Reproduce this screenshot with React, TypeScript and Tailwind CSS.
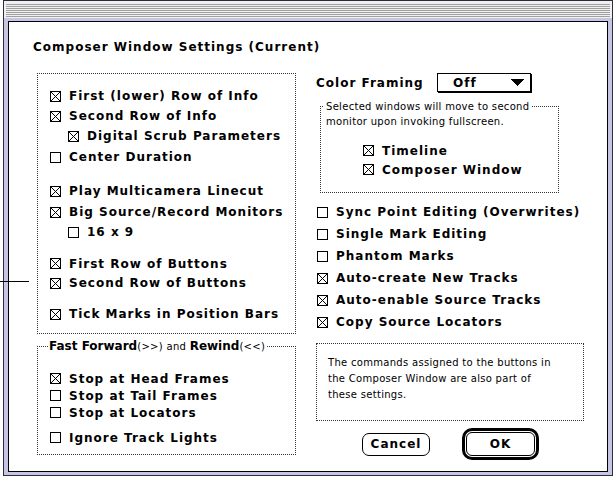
import React from "react";

function Box({ checked }: { checked: boolean }) {
  return (
    <svg width="11" height="11" viewBox="0 0 11 11" className="shrink-0" shapeRendering="crispEdges">
      <rect x="0.5" y="0.5" width="10" height="10" fill="white" stroke="black" />
      {checked && <path d="M1 1L10 10M10 1L1 10" stroke="black" strokeWidth="1" />}
    </svg>
  );
}

function Row({ label, checked, cls }: { label: string; checked: boolean; cls: string }) {
  return (
    <div className={"flex items-center gap-[8px] whitespace-nowrap " + cls}>
      <Box checked={checked} />
      <span className="text-[12px] font-bold tracking-[1px] leading-none">{label}</span>
    </div>
  );
}

export default function App() {
  return (
    <div className="relative w-[613px] h-[479px] bg-white overflow-hidden font-['DejaVu_Sans',sans-serif] text-black">
      <div className="ml-[3px] w-[610px] h-[476px] border border-[#2c2c3c] bg-[#c6c6e4] flex flex-col">
        {/* title bar */}
        <div className="h-[20px] flex flex-col bg-[#f0f0f0]">
          <div className="h-[3px]" />
          <div className="h-[14px] mx-[2px] bg-[repeating-linear-gradient(to_bottom,#a0a0a0_0px,#a0a0a0_1px,#f0f0f0_1px,#f0f0f0_2px)]" />
          <div className="h-[3px] bg-[#c6c6e4]" />
        </div>
        {/* content */}
        <div className="ml-[4px] mr-[4px] mb-[3px] flex-1 border border-black bg-white flex flex-col pl-[24px]">
          <div className="mt-[17px] h-[16px] leading-[16px] text-[12px] font-bold tracking-[1px] whitespace-nowrap">
            Composer Window Settings (Current)
          </div>
          <div className="mt-[18px] flex">
            {/* left column */}
            <div className="ml-[4px] w-[259px] flex flex-col">
              <div className="h-[261px] border border-dotted border-[#333] pt-[12px] pl-[12px] flex flex-col">
                <Row cls="h-[20px]" checked label="First (lower) Row of Info" />
                <Row cls="h-[20px]" checked label="Second Row of Info" />
                <Row cls="h-[20px] pl-[18px]" checked label="Digital Scrub Parameters" />
                <Row cls="h-[20px] mt-[1px]" checked={false} label="Center Duration" />
                <Row cls="h-[20px] mt-[14px]" checked label="Play Multicamera Linecut" />
                <Row cls="h-[20px] mt-[1px]" checked label="Big Source/Record Monitors" />
                <Row cls="h-[20px] pl-[18px]" checked={false} label="16 x 9" />
                <Row cls="h-[19px] mt-[12px]" checked label="First Row of Buttons" />
                <Row cls="h-[20px]" checked label="Second Row of Buttons" />
                <Row cls="h-[20px] mt-[11px]" checked label="Tick Marks in Position Bars" />
              </div>
              <fieldset className="mt-[4px] w-[259px] border border-dotted border-[#333] px-0 pb-[8px]">
                <legend className="ml-[10px] px-[1px] leading-[14px] whitespace-nowrap">
                  <span className="text-[12px] font-bold">Fast Forward</span>
                  <span className="text-[10px] tracking-[0.3px]">(&gt;&gt;) and </span>
                  <span className="text-[12px] font-bold">Rewind</span>
                  <span className="text-[10px] tracking-[0.3px]">(&lt;&lt;)</span>
                </legend>
                <div className="pt-[16px] pl-[12px] flex flex-col">
                  <Row cls="h-[17px]" checked label="Stop at Head Frames" />
                  <Row cls="h-[17px]" checked={false} label="Stop at Tail Frames" />
                  <Row cls="h-[17px]" checked={false} label="Stop at Locators" />
                  <Row cls="h-[17px] mt-[8px]" checked={false} label="Ignore Track Lights" />
                </div>
              </fieldset>
            </div>
            {/* right column */}
            <div className="ml-[20px] w-[268px] flex flex-col">
              <div className="h-[19px] flex items-center">
                <span className="w-[121px] text-[12px] font-bold tracking-[1px] whitespace-nowrap">Color Framing</span>
                <div className="w-[94px] h-[19px] border border-black shadow-[1px_1px_0_0_#000] flex items-center pl-[15px]">
                  <span className="text-[12px] font-bold tracking-[1px]">Off</span>
                  <svg width="14" height="7" viewBox="0 0 14 7" className="ml-auto mr-[6px]" shapeRendering="crispEdges">
                    <polygon points="0,0 14,0 7,7" fill="black" />
                  </svg>
                </div>
              </div>
              <fieldset className="mt-[7px] ml-[4px] w-[239px] border border-dotted border-[#333] px-0 pb-[13px]">
                <legend className="ml-[3px] px-[2px] leading-[15px] text-[10px] tracking-[0.3px] whitespace-nowrap">
                  Selected windows will move to second
                </legend>
                <div className="pl-[5px] leading-[15px] text-[10px] tracking-[0.3px] whitespace-nowrap">
                  monitor upon invoking fullscreen.
                </div>
                <div className="mt-[12px] pl-[42px] flex flex-col">
                  <Row cls="h-[19px]" checked label="Timeline" />
                  <Row cls="h-[19px]" checked label="Composer Window" />
                </div>
              </fieldset>
              <div className="mt-[8px] pl-[1px] flex flex-col">
                <Row cls="h-[22px]" checked={false} label="Sync Point Editing (Overwrites)" />
                <Row cls="h-[22px]" checked={false} label="Single Mark Editing" />
                <Row cls="h-[22px]" checked={false} label="Phantom Marks" />
                <Row cls="h-[22px]" checked label="Auto-create New Tracks" />
                <Row cls="h-[22px]" checked label="Auto-enable Source Tracks" />
                <Row cls="h-[22px]" checked label="Copy Source Locators" />
              </div>
              <div className="mt-[10px] w-[268px] h-[78px] border border-dotted border-[#333] pt-[11px] pl-[11px] text-[10px] tracking-[0.3px] leading-[16px] whitespace-nowrap">
                The commands assigned to the buttons in
                <br />
                the Composer Window are also part of
                <br />
                these settings.
              </div>
              <div className="mt-[7px] h-[32px] flex items-center">
                <div className="ml-[46px] w-[68px] h-[23px] rounded-[7px] border border-black flex items-center justify-center text-[12px] font-bold tracking-[1px]">
                  Cancel
                </div>
                <div className="ml-[32px] w-[77px] h-[32px] rounded-[10px] border-[3px] border-black p-[1px] flex">
                  <div className="flex-1 rounded-[6px] border border-black flex items-center justify-center text-[12px] font-bold tracking-[1px]">
                    OK
                  </div>
                </div>
              </div>
            </div>
          </div>
        </div>
      </div>
      <div className="absolute left-0 top-[281px] w-[29px] h-px bg-black" />
    </div>
  );
}
